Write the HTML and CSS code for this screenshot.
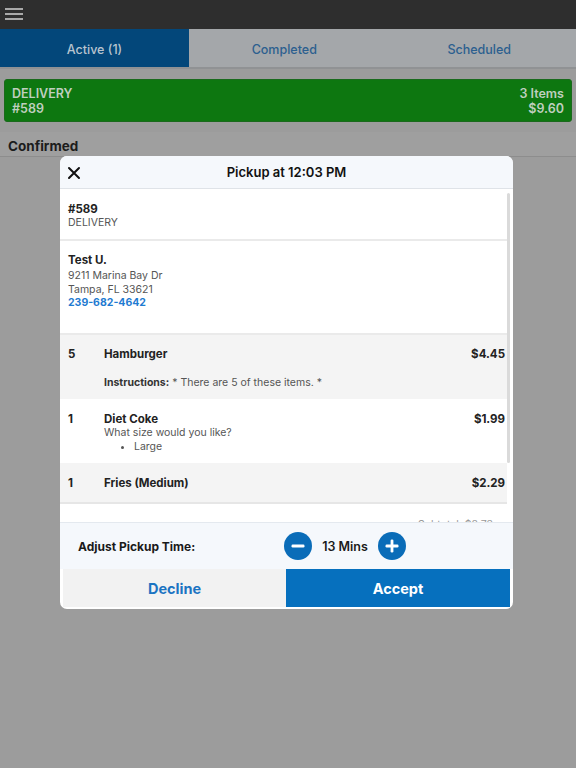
FILE: index.html
```html
<!DOCTYPE html>
<html>
<head>
<meta charset="utf-8">
<link rel="stylesheet" href="styles.css">
</head>
<body>
<div class="app">
  <header class="topbar">
    <svg class="menu" width="20" height="14" viewBox="0 0 20 14"><rect x="1" y="1" width="18" height="2" fill="#a9a9a9"/><rect x="1" y="6" width="18" height="2" fill="#a9a9a9"/><rect x="1" y="11" width="18" height="2" fill="#a9a9a9"/></svg>
  </header>
  <nav class="tabs">
    <div class="tab active">Active (1)</div>
    <div class="tab">Completed</div>
    <div class="tab">Scheduled</div>
  </nav>
  <div class="list">
    <div class="order-card">
      <div class="oc-col">
        <span>DELIVERY</span>
        <span>#589</span>
      </div>
      <div class="oc-col right">
        <span>3 Items</span>
        <span>$9.60</span>
      </div>
    </div>
  </div>
  <div class="section-head">Confirmed</div>
</div>

<div class="modal">
  <div class="m-head">
    <svg class="close" width="14" height="14" viewBox="0 0 14 14"><path d="M2 2L12 12M12 2L2 12" stroke="#111" stroke-width="2" stroke-linecap="round"/></svg>
    <div class="m-title">Pickup at 12:03 PM</div>
  </div>
  <div class="m-body">
    <div class="m-scroll">
      <div class="sec order">
        <div class="b">#589</div>
        <div class="sub">DELIVERY</div>
      </div>
      <div class="sec cust">
        <div class="b name">Test U.</div>
        <div class="sub">9211 Marina Bay Dr</div>
        <div class="sub">Tampa, FL 33621</div>
        <div class="phone">239-682-4642</div>
      </div>
      <div class="item gray tall">
        <div class="qty">5</div>
        <div class="desc">
          <div class="b">Hamburger</div>
          <div class="instr"><b>Instructions:</b> * There are 5 of these items. *</div>
        </div>
        <div class="price">$4.45</div>
      </div>
      <div class="item tall">
        <div class="qty">1</div>
        <div class="desc">
          <div class="b">Diet Coke</div>
          <div class="mod">What size would you like?</div>
          <ul class="opts"><li>Large</li></ul>
        </div>
        <div class="price">$1.99</div>
      </div>
      <div class="item gray short">
        <div class="qty">1</div>
        <div class="desc"><div class="b">Fries (Medium)</div></div>
        <div class="price">$2.29</div>
      </div>
      <div class="totals">Subtotal: $8.73</div>
    </div>
    <div class="scrollbar"></div>
  </div>
  <div class="m-foot">
    <div class="adj-label">Adjust Pickup Time:</div>
    <div class="stepper">
      <svg width="28" height="28" viewBox="0 0 28 28"><circle cx="14" cy="14" r="14" fill="#0a6cb8"/><rect x="7.5" y="12.6" width="13" height="2.8" rx="1.2" fill="#fff"/></svg>
      <span class="mins">13 Mins</span>
      <svg width="28" height="28" viewBox="0 0 28 28"><circle cx="14" cy="14" r="14" fill="#0a6cb8"/><rect x="7.5" y="12.6" width="13" height="2.8" rx="1.2" fill="#fff"/><rect x="12.6" y="7.5" width="2.8" height="13" rx="1.2" fill="#fff"/></svg>
    </div>
  </div>
  <div class="m-actions">
    <div class="btn decline">Decline</div>
    <div class="btn accept">Accept</div>
  </div>
</div>
</body>
</html>
```
FILE: styles.css
```css
* { box-sizing: border-box; }
html, body { margin: 0; padding: 0; }
body {
  width: 576px;
  height: 768px;
  background: #9c9c9c;
  font-family: Inter, "Liberation Sans", sans-serif;
  overflow: hidden;
  position: relative;
}
.topbar {
  height: 29px;
  background: #2e2e2e;
  display: flex;
  align-items: center;
  padding-left: 4px;
}
.menu { display: block; margin-top: -2px; }
.tabs {
  display: grid;
  grid-template-columns: 189px 1fr 1fr;
  height: 40px;
  background: #a4a7aa;
  border-bottom: 2px solid #909294;
}
.tab {
  display: flex;
  align-items: center;
  justify-content: center;
  padding-top: 2px;
  font-size: 12.5px;
  font-weight: 500;
  color: #2c5f8f;
}
.tab.active { background: #03477a; color: #b8c4cf; }
.tab:nth-child(2) { padding-right: 3px; }
.list { padding: 10px 4px 10px 4px; }
.order-card {
  height: 43px;
  background: #0d7710;
  border: 1px solid #1a6a1c;
  border-radius: 3px;
  display: flex;
  justify-content: space-between;
  padding: 7px 7px 0 7px;
  color: #bfcfbf;
  font-size: 12.5px;
  font-weight: 600;
}
.oc-col { display: flex; flex-direction: column; line-height: 14.5px; }
.oc-col.right { align-items: flex-end; }
.section-head {
  height: 25px;
  background: #9f9f9f;
  border-bottom: 1px solid #8d8d8d;
  padding: 6px 8px 0;
  font-size: 13.5px;
  font-weight: 700;
  color: #1c1c1c;
}

.modal {
  position: absolute;
  left: 60px;
  top: 156px;
  width: 453px;
  height: 453px;
  background: #fff;
  border-radius: 7px;
  overflow: hidden;
  display: flex;
  flex-direction: column;
  padding: 0 3px 2px;
  color: #222;
}
.m-head {
  height: 33px;
  margin: 0 -3px;
  background: #f5f8fc;
  border-bottom: 1px solid #dfe3e8;
  display: flex;
  align-items: center;
  justify-content: center;
  position: relative;
  flex: none;
}
.close { position: absolute; left: 7px; top: 10px; }
.m-title { font-size: 13px; font-weight: 600; color: #111; }
.m-body {
  height: 333px;
  flex: none;
  margin: 0 -3px;
  position: relative;
  overflow: hidden;
}
.m-scroll { padding-right: 6px; }
.scrollbar {
  position: absolute;
  right: 3px;
  top: 4px;
  width: 3px;
  height: 270px;
  border-radius: 2px;
  background: #dadada;
}
.b { font-weight: 700; font-size: 11.5px; color: #222; }
.sub { font-size: 10.5px; color: #555; line-height: 13.5px; }
.sec {
  padding: 14px 8px 0;
  border-bottom: 2px solid #eaeaea;
  line-height: 14px;
}
.sec .b { line-height: 13px; }
.order { height: 52px; }
.cust { height: 94px; padding-top: 13px; }
.cust .name { margin-bottom: 2px; }
.phone { font-size: 10.5px; font-weight: 700; color: #1f7bd1; line-height: 13px; }
.item {
  display: flex;
  align-items: flex-start;
  padding: 13px 2px 0 8px;
  background: #fff;
  line-height: 14px;
}
.item.gray { background: #f4f4f4; }
.item.gray.tall { padding-top: 12px; }
.item.tall { height: 64px; }
.item.short { height: 41px; padding-top: 13px; border-bottom: 2px solid #e6e6e6; }
.qty { width: 36px; font-weight: 700; font-size: 11.5px; }
.desc { flex: 1; }
.price { font-weight: 700; font-size: 11.5px; }
.instr { font-size: 10.5px; color: #555; margin-top: 15px; }
.instr b { color: #333; }
.mod { font-size: 10.5px; color: #555; line-height: 14px; }
.opts { margin: 0; padding-left: 30px; font-size: 10.5px; color: #555; line-height: 14px; }
.totals {
  text-align: right;
  font-size: 10.5px;
  color: #999;
  padding: 14px 14px 0 0;
}
.m-foot {
  height: 47px;
  flex: none;
  margin: 0 -3px;
  background: #f5f8fc;
  border-top: 1px solid #e4e9ef;
  display: flex;
  align-items: center;
  padding-left: 18px;
}
.adj-label { font-size: 12px; font-weight: 700; color: #1a1a1a; width: 206px; }
.stepper { display: flex; align-items: center; gap: 0; }
.stepper svg { display: block; }
.mins { font-size: 12.5px; font-weight: 600; color: #1a1a1a; width: 66px; text-align: center; }
.m-actions {
  flex: 1;
  display: grid;
  grid-template-columns: 223px 1fr;
}
.btn {
  display: flex;
  align-items: center;
  justify-content: center;
  font-size: 14.5px;
  font-weight: 700;
}
.decline { background: #f2f2f2; color: #1b74c2; }
.accept { background: #0670be; color: #fff; }
```
